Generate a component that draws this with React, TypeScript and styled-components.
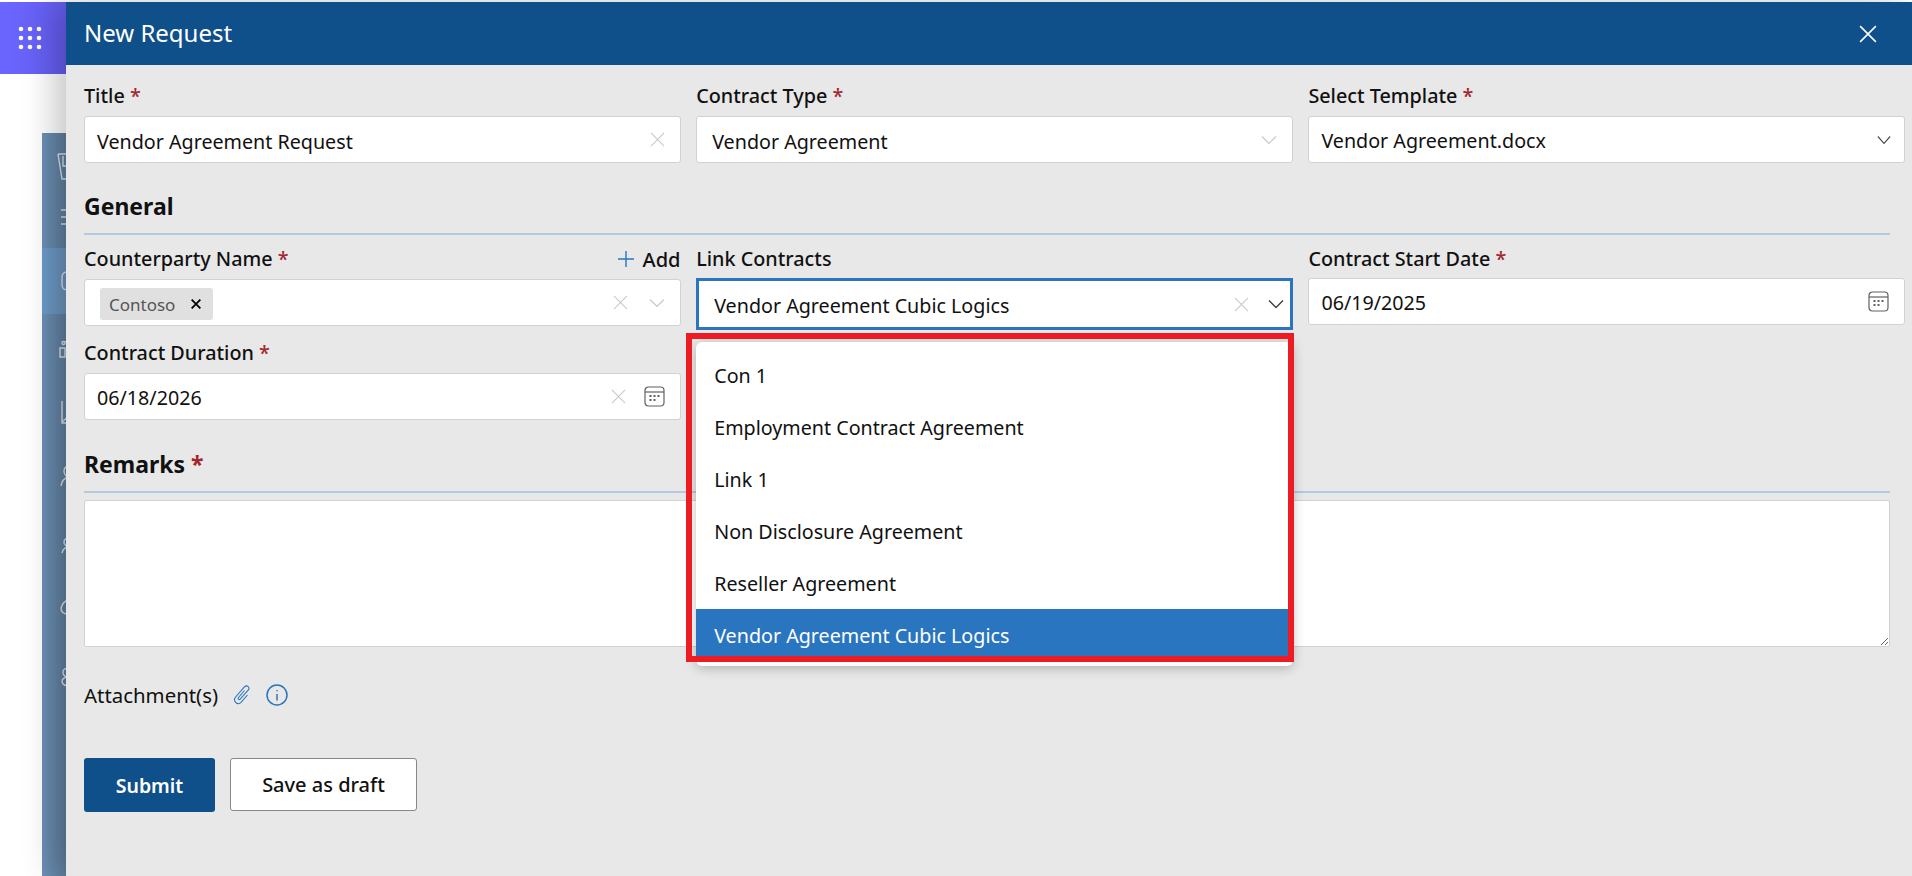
import styled, { createGlobalStyle } from 'styled-components';

const GlobalStyle = createGlobalStyle`
    html, body {
        margin: 0;
        padding: 0;
        height: 100%;
        background: #fff;
        overflow: hidden;
    }
    * {
        box-sizing: border-box;
    }
    body {
        font-family: "Noto Sans", "Open Sans", sans-serif;
        color: #111;
    }
`;

const CloseGlyph = ({ size = 15, color = '#c9c9c9', weight = 1.2 }: { size?: number; color?: string; weight?: number }) => (
    <svg width={size} height={size} viewBox="0 0 16 16" fill="none" stroke={color} strokeWidth={weight}>
        <path d="M1 1 L15 15 M15 1 L1 15" />
    </svg>
);

const Chevron = ({ color = '#c9c9c9', weight = 1.2, width = 16 }: { color?: string; weight?: number; width?: number }) => (
    <svg width={width} height="10" viewBox="0 0 16 10" preserveAspectRatio="none" fill="none" stroke={color} strokeWidth={weight}>
        <path d="M1 1.5 L8 8.5 L15 1.5" />
    </svg>
);

const CalendarGlyph = () => (
    <svg width="21" height="21" viewBox="0 0 21 21" fill="none" stroke="#616161" strokeWidth="1.2">
        <rect x="1" y="1" width="19" height="19" rx="3.5" />
        <path d="M1 6 H20" />
        <g fill="#616161" stroke="none">
            <rect x="5.5" y="9" width="2" height="2" />
            <rect x="9.5" y="9" width="2" height="2" />
            <rect x="13.5" y="9" width="2" height="2" />
            <rect x="5.5" y="13" width="2" height="2" />
            <rect x="9.5" y="13" width="2" height="2" />
        </g>
    </svg>
);

const PlusGlyph = () => (
    <svg width="18" height="18" viewBox="0 0 18 18" fill="none" stroke="#2a75bf" strokeWidth="1.4">
        <path d="M9 1 V17 M1 9 H17" />
    </svg>
);

const ClipGlyph = () => (
    <svg width="18" height="20" viewBox="0 0 18 20" fill="none" stroke="#2a75bf" strokeWidth="1.1">
        <path d="M11.5 5.5 L5.5 12.5 C4.5 13.8 6 15.2 7.2 14.2 L15.2 5.2 C17.6 2.4 14 -0.6 11.4 2 L2.6 12 C-0.4 15.6 4 20.8 7.8 17.6 L14.5 10" />
    </svg>
);

const InfoGlyph = () => (
    <svg width="22" height="22" viewBox="0 0 22 22" fill="none" stroke="#2a75bf" strokeWidth="1.5">
        <circle cx="11" cy="11" r="10" />
        <path d="M11 10 V16.5" />
        <circle cx="11" cy="6.8" r="0.8" fill="#2a75bf" stroke="none" />
    </svg>
);

const WaffleGlyph = () => (
    <svg width="24" height="24" viewBox="0 0 24 24" fill="#fff">
        {[3, 12, 21].map(y =>
            [3, 12, 21].map(x => <circle key={`${x}-${y}`} cx={x} cy={y} r="2.3" />)
        )}
    </svg>
);

// only the left edge of these shows, the panel covers the rest
const NavGlyph = ({ d }: { d: string }) => (
    <NavSvg width="30" height="30" viewBox="0 0 30 30" fill="none" stroke="#d8e0e8" strokeWidth="1.4">
        <path d={d} />
    </NavSvg>
);

const navItems = [
    { height: 68, d: 'M-2 2 H10 M-2 2 L2 27 H10 M3 4 V14 H10' },
    { height: 47, bottom: 16, d: 'M1 8 H10 M1 15 H10 M1 22 H10' },
    { height: 66, active: true, d: 'M8 6 Q2 6 2 11 V19 Q2 24 8 24' },
    { height: 66, d: 'M0 16 H5 V25 H0 Z M5 10 L10 7 M5 11 A1.5 1.5 0 1 1 2 11 A1.5 1.5 0 1 1 5 11' },
    { height: 65, d: 'M2 3 V25 H10 M2 24 L10 17' },
    { height: 65, d: 'M10 3 Q4 3 4 8 Q4 12 8 14 Q2 16 1 23' },
    { height: 65, d: 'M10 10 Q4 10 4 14 Q4 17 8 19 Q3 20 2 25' },
    { height: 65, d: 'M10 6 Q3 8 1 15 Q1 21 8 21' },
    { height: 65, d: 'M10 10 Q3 10 3 14 Q3 18 7 19 Q2 20 2 24 Q3 28 10 28' },
];

const options = [
    'Con 1',
    'Employment Contract Agreement',
    'Link 1',
    'Non Disclosure Agreement',
    'Reseller Agreement',
    'Vendor Agreement Cubic Logics',
];

const App = () => {
    return (
        <Page>
            <GlobalStyle />
            <Rail>
                <Waffle>
                    <WaffleGlyph />
                </Waffle>
                <SideNav>
                    {navItems.map((item, i) => (
                        <NavItem key={i} $height={item.height} $active={item.active} $bottom={item.bottom}>
                            <NavGlyph d={item.d} />
                        </NavItem>
                    ))}
                </SideNav>
            </Rail>

            <Panel>
                <PanelHeader>
                    <PanelTitle>New Request</PanelTitle>
                    <CloseGlyph size={18} color="#fff" weight={1.4} />
                </PanelHeader>

                <PanelBody>
                    <FieldGrid>
                        <Field>
                            <Label>Title <Req>*</Req></Label>
                            <InputBox>
                                <Value $drop={4}>Vendor Agreement Request</Value>
                                <CloseGlyph />
                            </InputBox>
                        </Field>
                        <Field>
                            <Label>Contract Type <Req>*</Req></Label>
                            <InputBox>
                                <Value $inset={3} $drop={4}>Vendor Agreement</Value>
                                <Chevron />
                            </InputBox>
                        </Field>
                        <Field>
                            <Label>Select Template <Req>*</Req></Label>
                            <InputBox>
                                <Value $drop={2}>Vendor Agreement.docx</Value>
                                <PushedRight>
                                    <Chevron color="#444" width={14} />
                                </PushedRight>
                            </InputBox>
                        </Field>
                    </FieldGrid>

                    <SectionTitle>General</SectionTitle>
                    <SectionRule />

                    <FieldGrid $top={12} $rowGap={15}>
                        <Field>
                            <LabelRow>
                                <Label>Counterparty Name <Req>*</Req></Label>
                                <AddLink>
                                    <PlusGlyph />
                                    Add
                                </AddLink>
                            </LabelRow>
                            <InputBox>
                                <Chip>
                                    <ChipText>Contoso</ChipText>
                                    <CloseGlyph size={10} color="#000" weight={3} />
                                </Chip>
                                <IconPair $gap={21}>
                                    <CloseGlyph />
                                    <Chevron />
                                </IconPair>
                            </InputBox>
                        </Field>
                        <Field>
                            <Label>Link Contracts</Label>
                            <FocusBox>
                                <Value $inset={15} $drop={2}>Vendor Agreement Cubic Logics</Value>
                                <IconPair $gap={19}>
                                    <CloseGlyph />
                                    <Chevron color="#444" weight={1.5} />
                                </IconPair>
                            </FocusBox>
                            <Listbox>
                                {options.map(option => (
                                    <Option key={option} $selected={option === 'Vendor Agreement Cubic Logics'}>
                                        {option}
                                    </Option>
                                ))}
                            </Listbox>
                            <RedMark />
                        </Field>
                        <Field>
                            <Label>Contract Start Date <Req>*</Req></Label>
                            <InputBox $raised>
                                <Value $drop={2}>06/19/2025</Value>
                                <CalendarGlyph />
                            </InputBox>
                        </Field>
                        <Field>
                            <Label>Contract Duration <Req>*</Req></Label>
                            <InputBox>
                                <Value $drop={2}>06/18/2026</Value>
                                <IconPair $gap={18}>
                                    <CloseGlyph />
                                    <CalendarGlyph />
                                </IconPair>
                            </InputBox>
                        </Field>
                    </FieldGrid>

                    <RemarksTitle>Remarks <Req>*</Req></RemarksTitle>
                    <SectionRule />
                    <Remarks />

                    <AttachRow>
                        Attachment(s)
                        <ClipGlyph />
                        <InfoGlyph />
                    </AttachRow>

                    <Actions>
                        <SubmitButton>Submit</SubmitButton>
                        <DraftButton>Save as draft</DraftButton>
                    </Actions>
                </PanelBody>
            </Panel>
        </Page>
    );
};

export default App;

const Page = styled.div`
    display: flex;
    height: 876px;
    padding-top: 2px;
    overflow: hidden;
`;

const Rail = styled.div`
    width: 66px;
    flex-shrink: 0;
    display: flex;
    flex-direction: column;
`;

const Waffle = styled.div`
    height: 72px;
    padding-left: 18px;
    background: linear-gradient(90deg, #6a66ff, #655df0);
    display: flex;
    align-items: center;
`;

const SideNav = styled.div`
    margin: 59px 0 0 42px;
    flex: 1;
    background: linear-gradient(90deg, #6c90b6, #607f9e);
    display: flex;
    flex-direction: column;
`;

const NavItem = styled.div<{ $height: number; $active?: boolean; $bottom?: number }>`
    height: ${p => p.$height}px;
    flex-shrink: 0;
    padding: 0 0 ${p => p.$bottom || 0}px 18px;
    background: ${p => (p.$active ? 'linear-gradient(90deg, #6b9bc9, #6a93bc)' : 'transparent')};
    display: flex;
    align-items: center;
`;

const NavSvg = styled.svg`
    flex-shrink: 0;
    overflow: visible;
`;

const Panel = styled.div`
    position: relative;
    flex: 1;
    background: #e8e8e8;
    box-shadow: -12px 0 30px rgba(0, 0, 0, 0.22);
`;

const PanelHeader = styled.div`
    height: 63px;
    background: #0f4f8a;
    display: flex;
    align-items: center;
    justify-content: space-between;
    padding: 0 35px 0 18px;
`;

const PanelTitle = styled.div`
    color: #fff;
    font-size: 24px;
    padding-bottom: 3px;
`;

const PanelBody = styled.div`
    padding: 19px 7px 0 18px;
`;

const FieldGrid = styled.div<{ $rowGap?: number; $top?: number }>`
    display: grid;
    grid-template-columns: repeat(3, 596.5px);
    column-gap: 15.7px;
    row-gap: ${p => p.$rowGap || 0}px;
    margin-top: ${p => p.$top || 0}px;
    align-items: start;
`;

const Field = styled.div`
    position: relative;
`;

const Label = styled.div`
    height: 24px;
    margin-bottom: 8px;
    font-size: 19.8px;
    font-weight: 500;
    line-height: 24px;
    white-space: nowrap;
`;

const LabelRow = styled.div`
    display: flex;
    justify-content: space-between;
`;

const Req = styled.span`
    color: #a4262c;
`;

const AddLink = styled.div`
    display: flex;
    align-items: center;
    gap: 8px;
    height: 24px;
    font-size: 20px;
    font-weight: 500;
`;

const InputBox = styled.div<{ $raised?: boolean }>`
    height: 47px;
    margin-top: ${p => (p.$raised ? -1 : 0)}px;
    background: #fff;
    border: 1px solid #d2d2d2;
    border-radius: 3px;
    display: flex;
    align-items: center;
    justify-content: space-between;
    padding: 0 15px 0 12px;
    font-size: 19.7px;
`;

const FocusBox = styled(InputBox)`
    height: 52px;
    margin: -1px 0 -4px;
    border: 3px solid #2a75bf;
    border-radius: 0;
    padding: 0 6px 0 0;
`;

const Value = styled.span<{ $inset?: number; $drop?: number }>`
    padding-left: ${p => p.$inset || 0}px;
    padding-top: ${p => p.$drop || 0}px;
    white-space: nowrap;
`;

const IconPair = styled.div<{ $gap: number }>`
    display: flex;
    align-items: center;
    gap: ${p => p.$gap}px;
`;

const PushedRight = styled.div`
    display: flex;
    margin-right: -2px;
`;

const Chip = styled.div`
    height: 32px;
    margin: 2px 0 0 3px;
    padding: 0 12px 0 9px;
    background: #e0e0e0;
    border-radius: 3px;
    display: flex;
    align-items: center;
    gap: 16px;
    color: #555;
    font-size: 17px;
`;

const ChipText = styled.span`
    padding-top: 1px;
`;

const SectionTitle = styled.div`
    margin-top: 28px;
    font-size: 23px;
    font-weight: 700;
    line-height: 30px;
`;

const RemarksTitle = styled(SectionTitle)`
    margin-top: 29px;
`;

const SectionRule = styled.div`
    height: 2px;
    margin: 12px 15px 0 0;
    background: #b3c9df;
`;

const Remarks = styled.textarea`
    display: block;
    width: calc(100% - 15px);
    height: 147px;
    margin-top: 7px;
    background: #fff;
    border: 1px solid #d2d2d2;
    border-radius: 2px;
    outline: none;
`;

const AttachRow = styled.div`
    display: flex;
    align-items: center;
    gap: 15px;
    margin-top: 35px;
    height: 26px;
    font-size: 20.4px;
`;

const Actions = styled.div`
    display: flex;
    align-items: flex-start;
    gap: 15px;
    margin-top: 50px;
`;

const SubmitButton = styled.button`
    width: 131px;
    height: 54px;
    background: #0f4f8a;
    color: #fff;
    border: none;
    border-radius: 3px;
    font: 600 19.5px "Noto Sans", sans-serif;
`;

const DraftButton = styled.button`
    width: 187px;
    height: 53px;
    background: #fff;
    color: #111;
    border: 1px solid #8a8886;
    border-radius: 3px;
    font: 500 20px "Noto Sans", sans-serif;
`;

const Listbox = styled.div`
    position: absolute;
    top: 95px;
    left: 0;
    width: 597px;
    height: 324px;
    padding-top: 7px;
    background: #fff;
    border-radius: 6px;
    box-shadow: 0 2px 12px rgba(0, 0, 0, 0.25);
    z-index: 2;
    overflow: hidden;
`;

const Option = styled.div<{ $selected?: boolean }>`
    height: 52px;
    padding-left: 18px;
    display: flex;
    align-items: center;
    font-size: 19.7px;
    background: ${p => (p.$selected ? '#2a75bf' : 'transparent')};
    color: ${p => (p.$selected ? '#fff' : '#111')};
`;

const RedMark = styled.div`
    position: absolute;
    top: 86px;
    left: -10px;
    width: 608px;
    height: 329px;
    border: 6px solid #ed1c24;
    z-index: 3;
    pointer-events: none;
`;
